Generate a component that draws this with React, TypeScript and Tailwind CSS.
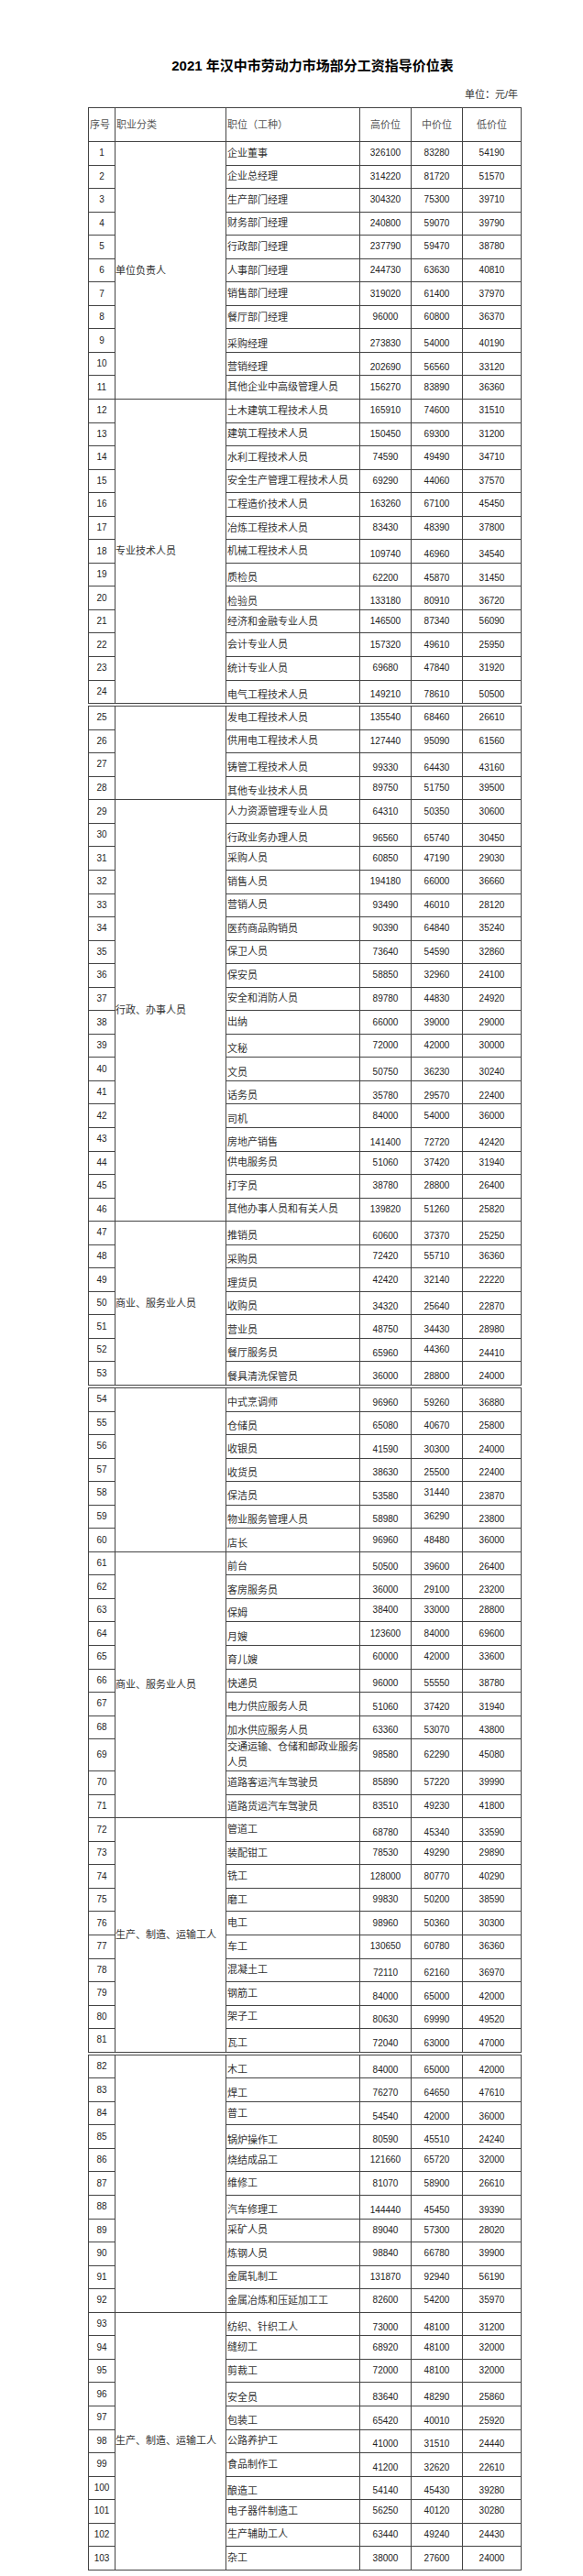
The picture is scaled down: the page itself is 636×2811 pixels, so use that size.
import React from 'react';

type Row = [string, number, number, number];

const data: Row[] = [
  ['企业董事', 326100, 83280, 54190],
  ['企业总经理', 314220, 81720, 51570],
  ['生产部门经理', 304320, 75300, 39710],
  ['财务部门经理', 240800, 59070, 39790],
  ['行政部门经理', 237790, 59470, 38780],
  ['人事部门经理', 244730, 63630, 40810],
  ['销售部门经理', 319020, 61400, 37970],
  ['餐厅部门经理', 96000, 60800, 36370],
  ['采购经理', 273830, 54000, 40190],
  ['营销经理', 202690, 56560, 33120],
  ['其他企业中高级管理人员', 156270, 83890, 36360],
  ['土木建筑工程技术人员', 165910, 74600, 31510],
  ['建筑工程技术人员', 150450, 69300, 31200],
  ['水利工程技术人员', 74590, 49490, 34710],
  ['安全生产管理工程技术人员', 69290, 44060, 37570],
  ['工程造价技术人员', 163260, 67100, 45450],
  ['冶炼工程技术人员', 83430, 48390, 37800],
  ['机械工程技术人员', 109740, 46960, 34540],
  ['质检员', 62200, 45870, 31450],
  ['检验员', 133180, 80910, 36720],
  ['经济和金融专业人员', 146500, 87340, 56090],
  ['会计专业人员', 157320, 49610, 25950],
  ['统计专业人员', 69680, 47840, 31920],
  ['电气工程技术人员', 149210, 78610, 50500],
  ['发电工程技术人员', 135540, 68460, 26610],
  ['供用电工程技术人员', 127440, 95090, 61560],
  ['铸管工程技术人员', 99330, 64430, 43160],
  ['其他专业技术人员', 89750, 51750, 39500],
  ['人力资源管理专业人员', 64310, 50350, 30600],
  ['行政业务办理人员', 96560, 65740, 30450],
  ['采购人员', 60850, 47190, 29030],
  ['销售人员', 194180, 66000, 36660],
  ['营销人员', 93490, 46010, 28120],
  ['医药商品购销员', 90390, 64840, 35240],
  ['保卫人员', 73640, 54590, 32860],
  ['保安员', 58850, 32960, 24100],
  ['安全和消防人员', 89780, 44830, 24920],
  ['出纳', 66000, 39000, 29000],
  ['文秘', 72000, 42000, 30000],
  ['文员', 50750, 36230, 30240],
  ['话务员', 35780, 29570, 22400],
  ['司机', 84000, 54000, 36000],
  ['房地产销售', 141400, 72720, 42420],
  ['供电服务员', 51060, 37420, 31940],
  ['打字员', 38780, 28800, 26400],
  ['其他办事人员和有关人员', 139820, 51260, 25820],
  ['推销员', 60600, 37370, 25250],
  ['采购员', 72420, 55710, 36360],
  ['理货员', 42420, 32140, 22220],
  ['收购员', 34320, 25640, 22870],
  ['营业员', 48750, 34430, 28980],
  ['餐厅服务员', 65960, 44360, 24410],
  ['餐具清洗保管员', 36000, 28800, 24000],
  ['中式烹调师', 96960, 59260, 36880],
  ['仓储员', 65080, 40670, 25800],
  ['收银员', 41590, 30300, 24000],
  ['收货员', 38630, 25500, 22400],
  ['保洁员', 53580, 31440, 23870],
  ['物业服务管理人员', 58980, 36290, 23800],
  ['店长', 96960, 48480, 36000],
  ['前台', 50500, 39600, 26400],
  ['客房服务员', 36000, 29100, 23200],
  ['保姆', 38400, 33000, 28800],
  ['月嫂', 123600, 84000, 69600],
  ['育儿嫂', 60000, 42000, 33600],
  ['快递员', 96000, 55550, 38780],
  ['电力供应服务人员', 51060, 37420, 31940],
  ['加水供应服务人员', 63360, 53070, 43800],
  ['交通运输、仓储和邮政业服务人员', 98580, 62290, 45080],
  ['道路客运汽车驾驶员', 85890, 57220, 39990],
  ['道路货运汽车驾驶员', 83510, 49230, 41800],
  ['管道工', 68780, 45340, 33590],
  ['装配钳工', 78530, 49290, 29890],
  ['铣工', 128000, 80770, 40290],
  ['磨工', 99830, 50200, 38590],
  ['电工', 98960, 50360, 30300],
  ['车工', 130650, 60780, 36360],
  ['混凝土工', 72110, 62160, 36970],
  ['钢筋工', 84000, 65000, 42000],
  ['架子工', 80630, 69990, 49520],
  ['瓦工', 72040, 63000, 47000],
  ['木工', 84000, 65000, 42000],
  ['焊工', 76270, 64650, 47610],
  ['普工', 54540, 42000, 36000],
  ['锅炉操作工', 80590, 45510, 24240],
  ['烧结成品工', 121660, 65720, 32000],
  ['维修工', 81070, 58900, 26610],
  ['汽车修理工', 144440, 45450, 39390],
  ['采矿人员', 89040, 57300, 28020],
  ['炼钢人员', 98840, 66780, 39900],
  ['金属轧制工', 131870, 92940, 56190],
  ['金属冶炼和压延加工工', 82600, 54200, 35970],
  ['纺织、针织工人', 73000, 48100, 31200],
  ['缝纫工', 68920, 48100, 32000],
  ['剪裁工', 72000, 48100, 32000],
  ['安全员', 83640, 48290, 25860],
  ['包装工', 65420, 40010, 25920],
  ['公路养护工', 41000, 31510, 24440],
  ['食品制作工', 41200, 32620, 22610],
  ['酿造工', 54140, 45430, 39280],
  ['电子器件制造工', 56250, 40120, 30280],
  ['生产辅助工人', 63440, 49240, 24430],
  ['杂工', 38000, 27600, 24000],
];

// which cells sit low in their row: n = name, h/m/l = the three prices
const low: Record<number, string> = {
  9: 'nhml', 10: 'nhml', 18: 'hml', 19: 'nhml', 20: 'nhml', 24: 'nhml', 27: 'nhml', 28: 'n',
  30: 'nhml', 39: 'n', 40: 'nhml', 41: 'nhml', 42: 'n', 43: 'nhml', 47: 'nhml', 48: 'n', 49: 'n',
  50: 'nhml', 51: 'nhml', 52: 'nhl', 53: 'nhml', 54: 'nhml', 55: 'nhml', 56: 'nhml', 57: 'nhml',
  58: 'nhl', 59: 'nhl', 60: 'n', 61: 'nhml', 62: 'nhml', 63: 'n', 64: 'n', 65: 'n', 66: 'nhml',
  67: 'nhml', 68: 'nhml', 72: 'hml', 78: 'hml', 79: 'hml', 80: 'hml', 81: 'nhml', 82: 'nhml',
  83: 'nhml', 84: 'hml', 85: 'nhml', 88: 'nhml', 93: 'nhml', 96: 'nhml', 97: 'nhml', 98: 'hml',
  99: 'hml', 100: 'nhml',
};

type Group = [string, number, number];

interface BlockDef {
  header?: boolean;
  rows: string;
  groups: Group[];
}

const blocks: BlockDef[] = [
  {
    header: true,
    rows: 'grid-rows-[37px_repeat(24,25.55px)]',
    groups: [['单位负责人', 1, 11], ['专业技术人员', 12, 24]],
  },
  {
    rows: 'grid-rows-[repeat(29,25.55px)]',
    groups: [['', 25, 28], ['行政、办事人员', 29, 46], ['商业、服务业人员', 47, 53]],
  },
  {
    rows: 'grid-rows-[repeat(15,25.55px)_35px_repeat(12,25.55px)]',
    groups: [['', 54, 60], ['商业、服务业人员', 61, 71], ['生产、制造、运输工人', 72, 81]],
  },
  {
    rows: 'grid-rows-[repeat(22,25.55px)]',
    groups: [['', 82, 92], ['生产、制造、运输工人', 93, 103]],
  },
];

const spans: Record<number, string> = {
  4: 'row-span-4',
  7: 'row-span-7',
  10: 'row-span-10',
  11: 'row-span-11',
  13: 'row-span-13',
  18: 'row-span-18',
};

const cell = 'border-r border-b border-[#444] flex items-center whitespace-nowrap';
const cjk = "font-['Liberation_Sans','Noto_Sans_CJK_SC',sans-serif] text-[11px] leading-none text-[#333]";
const num = "font-['Liberation_Sans',sans-serif] text-[10px] leading-none text-[#222] justify-center";

const Block: React.FC<{ block: BlockDef }> = ({ block }) => {
  const cells: React.ReactNode[] = [];

  if (block.header) {
    const h = "font-['Liberation_Sans','Noto_Sans_CJK_SC',sans-serif] text-[11px] leading-none text-[#555]";
    cells.push(
      <div key="h1" className={`${cell} ${h} pl-[1px]`}>序号</div>,
      <div key="h2" className={`${cell} ${h} pl-[1px]`}>职业分类</div>,
      <div key="h3" className={`${cell} ${h} pl-[1px]`}>职位（工种）</div>,
      <div key="h4" className={`${cell} ${h} justify-center`}>高价位</div>,
      <div key="h5" className={`${cell} ${h} justify-center`}>中价位</div>,
      <div key="h6" className={`${cell} ${h} justify-center`}>低价位</div>,
    );
  }

  block.groups.forEach(([label, start, end]) => {
    for (let n = start; n <= end; n++) {
      const [name, hi, mid, lo] = data[n - 1];
      const f = low[n] ?? '';
      cells.push(
        <div key={`s${n}`} className={`${cell} ${num}`}>{n}</div>,
      );
      if (n === start) {
        cells.push(
          <div key={`g${n}`} className={`${cell} ${cjk} ${spans[end - start + 1]}`}>{label}</div>,
        );
      }
      cells.push(
        <div key={`n${n}`} className={`${cell} ${cjk} pl-[1px] ${f.includes('n') ? 'pt-[7px]' : ''}`}>
          {n === 69 ? (
            <span className="leading-[17px]">
              交通运输、仓储和邮政业服务
              <br />
              人员
            </span>
          ) : (
            name
          )}
        </div>,
        <div key={`h${n}`} className={`${cell} ${num} ${f.includes('h') ? 'pt-[7px]' : ''}`}>{hi}</div>,
        <div key={`m${n}`} className={`${cell} ${num} ${f.includes('m') ? 'pt-[7px]' : ''}`}>{mid}</div>,
        <div key={`l${n}`} className={`${cell} ${num} ${f.includes('l') ? 'pt-[7px]' : ''}`}>{lo}</div>,
      );
    }
  });

  return (
    <div
      className={`grid grid-cols-[29px_121px_146px_56px_56px_64px] ${block.rows} border-l border-t border-[#444]`}
    >
      {cells}
    </div>
  );
};

export default function App() {
  return (
    <div className="min-h-[2811px] w-[636px] bg-white pt-[62px]">
      <div className="ml-[96px] w-[473px]">
        <h1 className="pl-[17px] text-center text-[15px] leading-[20px] font-bold text-black font-['Liberation_Sans','Noto_Sans_CJK_SC',sans-serif]">
          2021 年汉中市劳动力市场部分工资指导价位表
        </h1>
        <div className="mt-[14px] pr-[4px] text-right text-[11px] leading-[14px] text-[#333] font-['Liberation_Sans','Noto_Sans_CJK_SC',sans-serif]">
          单位：元/年
        </div>
        <div className="mt-[7px] flex flex-col gap-[2px]">
          {blocks.map((b, i) => (
            <Block key={i} block={b} />
          ))}
        </div>
      </div>
    </div>
  );
}
